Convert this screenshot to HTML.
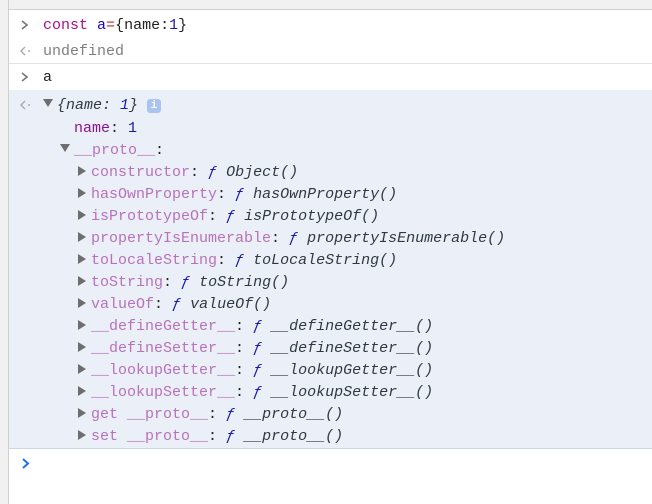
<!DOCTYPE html>
<html><head><style>
body{margin:0;width:652px;height:504px;overflow:hidden;background:#fff;font-family:"Liberation Mono",monospace;font-size:15px;position:relative;color:#222}
.side{position:absolute;left:0;top:0;width:8px;height:504px;background:#f1f1f1;border-right:1px solid #d0d0d0}
.top{position:absolute;left:0;top:0;width:652px;height:9px;background:#f1f1f1;border-bottom:1px solid #d0d0d0}
.row{position:absolute;left:9px;right:0;white-space:pre;line-height:22px}
.sep{position:absolute;left:9px;right:0;height:1px;background:#e4e4e4}
.blk{position:absolute;left:9px;right:0;top:90px;height:358px;background:#ebf0f8;border-bottom:1px solid #c9d6e8}
.k{color:#881391}.pk{color:#b871bd}.n{color:#1a1aa6}.f{color:#1a1aa6;font-style:italic}.i{font-style:italic;color:#303942}
.g{color:#808080}
.tri{display:inline-block;width:0;height:0;border-left:8px solid #6e6e6e;border-top:5px solid transparent;border-bottom:5px solid transparent;margin-right:5px;vertical-align:0px}
.tri.d{border-top:8px solid #6e6e6e;border-left:5px solid transparent;border-right:5px solid transparent;border-bottom:0;margin-right:4px;vertical-align:2px}
svg.ic{position:absolute;left:20px}
</style></head><body>
<div class="top"></div><div class="side"></div>
<div class="sep" style="top:63px"></div>
<div class="blk"></div>
<svg class="ic" style="top:20px" width="10" height="10"><path d="M2 1L7 5L2 9" fill="none" stroke="#777" stroke-width="1.6"/></svg>
<div class="row" style="top:15px;left:43px"><span style="color:#aa0d91">const</span> <span style="color:#1c00cf">a</span><span style="color:#a33">=</span>{name:<span class="n">1</span>}</div>
<svg class="ic" style="top:46px" width="12" height="10"><path d="M5 1L1 5L5 9" fill="none" stroke="#aaa" stroke-width="1.4"/><circle cx="9" cy="5" r="1" fill="#aaa"/></svg>
<div class="row g" style="top:41px;left:43px">undefined</div>
<svg class="ic" style="top:72px" width="10" height="10"><path d="M2 1L7 5L2 9" fill="none" stroke="#777" stroke-width="1.6"/></svg>
<div class="row" style="top:67px;left:43px">a</div>
<svg class="ic" style="top:100px" width="12" height="10"><path d="M5 1L1 5L5 9" fill="none" stroke="#aaa" stroke-width="1.4"/><circle cx="9" cy="5" r="1" fill="#aaa"/></svg>
<div class="row" style="top:95px;left:43px"><span class="tri d"></span><span class="i">{name: <span class="n">1</span>}</span> <span style="display:inline-block;width:14px;height:14px;background:#a9c5ef;border-radius:3px;color:#fff;font-size:11px;line-height:14px;text-align:center;font-weight:bold;vertical-align:1px">i</span></div>
<div class="row" style="top:118px;left:74px"><span class="k">name</span>: <span class="n">1</span></div>
<div class="row" style="top:140px;left:60px"><span class="tri d"></span><span class="pk">__proto__</span>:</div>
<div class="row" style="top:162px;left:78px"><span class="tri"></span><span class="pk">constructor</span>: <span class="f">ƒ</span> <span class="i">Object()</span></div>
<div class="row" style="top:184px;left:78px"><span class="tri"></span><span class="pk">hasOwnProperty</span>: <span class="f">ƒ</span> <span class="i">hasOwnProperty()</span></div>
<div class="row" style="top:206px;left:78px"><span class="tri"></span><span class="pk">isPrototypeOf</span>: <span class="f">ƒ</span> <span class="i">isPrototypeOf()</span></div>
<div class="row" style="top:228px;left:78px"><span class="tri"></span><span class="pk">propertyIsEnumerable</span>: <span class="f">ƒ</span> <span class="i">propertyIsEnumerable()</span></div>
<div class="row" style="top:250px;left:78px"><span class="tri"></span><span class="pk">toLocaleString</span>: <span class="f">ƒ</span> <span class="i">toLocaleString()</span></div>
<div class="row" style="top:272px;left:78px"><span class="tri"></span><span class="pk">toString</span>: <span class="f">ƒ</span> <span class="i">toString()</span></div>
<div class="row" style="top:294px;left:78px"><span class="tri"></span><span class="pk">valueOf</span>: <span class="f">ƒ</span> <span class="i">valueOf()</span></div>
<div class="row" style="top:316px;left:78px"><span class="tri"></span><span class="pk">__defineGetter__</span>: <span class="f">ƒ</span> <span class="i">__defineGetter__()</span></div>
<div class="row" style="top:338px;left:78px"><span class="tri"></span><span class="pk">__defineSetter__</span>: <span class="f">ƒ</span> <span class="i">__defineSetter__()</span></div>
<div class="row" style="top:360px;left:78px"><span class="tri"></span><span class="pk">__lookupGetter__</span>: <span class="f">ƒ</span> <span class="i">__lookupGetter__()</span></div>
<div class="row" style="top:382px;left:78px"><span class="tri"></span><span class="pk">__lookupSetter__</span>: <span class="f">ƒ</span> <span class="i">__lookupSetter__()</span></div>
<div class="row" style="top:404px;left:78px"><span class="tri"></span><span class="pk">get __proto__</span>: <span class="f">ƒ</span> <span class="i">__proto__()</span></div>
<div class="row" style="top:426px;left:78px"><span class="tri"></span><span class="pk">set __proto__</span>: <span class="f">ƒ</span> <span class="i">__proto__()</span></div>
<svg class="ic" style="top:458px;left:21px" width="10" height="11"><path d="M2 1L7 5.5L2 10" fill="none" stroke="#1a73e8" stroke-width="2"/></svg>
</body></html>
